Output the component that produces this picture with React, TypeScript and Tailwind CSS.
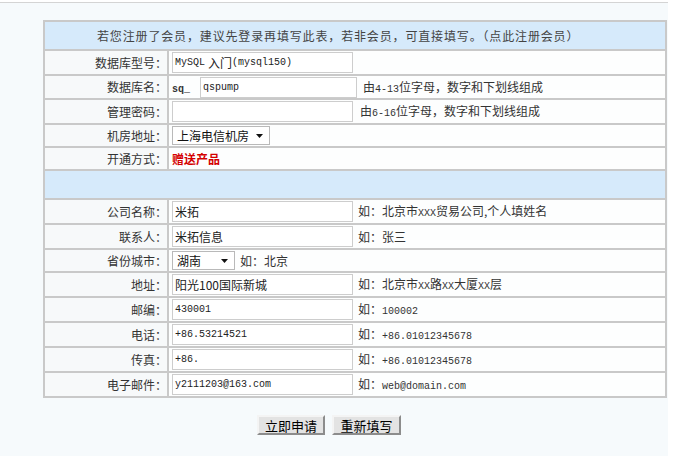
import type { ReactNode } from "react";

// 半角文字（原页面的宋体拉丁字形），用等宽字体替代
function M({ children, bold }: { children: ReactNode; bold?: boolean }) {
  return (
    <span className={`font-['Liberation_Mono',monospace] text-[10px] ${bold ? "font-bold" : ""}`}>
      {children}
    </span>
  );
}

function Label({ children }: { children: ReactNode }) {
  return (
    <div className="flex items-center justify-end bg-[#f7f9fa] text-[12px] text-[#333]">{children}</div>
  );
}

function Field({ value, width = "w-[181px]", mono }: { value: ReactNode; width?: string; mono?: boolean }) {
  return (
    <div
      className={`flex h-[21px] items-center border border-[#cdcdcd] bg-white pl-[2px] text-[12px] text-[#222] ${width}`}
    >
      {mono ? <M>{value}</M> : value}
    </div>
  );
}

function Select({ value, width }: { value: string; width: string }) {
  return (
    <div
      className={`flex h-[19px] items-center justify-between border border-[#b9b9b9] bg-white pl-[4px] pr-[6px] text-[12px] text-[#111] ${width}`}
    >
      <span>{value}</span>
      <svg width="7" height="4" viewBox="0 0 7 4">
        <path d="M0 0h7L3.5 4z" fill="#111" />
      </svg>
    </div>
  );
}

const COMPANY = [
  { label: "公司名称：", value: "米拓", hint: <>如：北京市<M>XXX</M>贸易公司,个人填姓名</> },
  { label: "联系人：", value: "米拓信息", hint: <>如：张三</> },
  { label: "省份城市：", select: "湖南", hint: <>如：北京</> },
  { label: "地址：", value: "阳光100国际新城", hint: <>如：北京市<M>XX</M>路<M>XX</M>大厦<M>XX</M>层</> },
  { label: "邮编：", value: "430001", mono: true, hint: <>如：<M>100002</M></> },
  { label: "电话：", value: "+86.53214521", mono: true, hint: <>如：<M>+86.01012345678</M></> },
  { label: "传真：", value: "+86.", mono: true, hint: <>如：<M>+86.01012345678</M></> },
  { label: "电子邮件：", value: "y2111203@163.com", mono: true, hint: <>如：<M>web@domain.com</M></> },
];

export default function App() {
  return (
    <div className="h-[456px] w-[685px] overflow-hidden bg-white font-['Noto_Sans_CJK_SC',sans-serif] text-[#333]">
      <div className="ml-0 mt-[2px] h-[454px] w-[668px] border-t border-[#d4d4d4] bg-[#f6fafc]">
        <div className="ml-[43px] mt-[17px] grid w-[624px] grid-cols-[122px_1fr] gap-[2px] bg-[#c9c9c9] p-[2px]">
          {/* 提示 */}
          <div className="col-span-2 flex h-[27px] items-center bg-[#d6eafb] pl-[52px] text-[12px] tracking-[0.85px] text-[#444]">
            若您注册了会员，建议先登录再填写此表，若非会员，可直接填写。（点此注册会员）
          </div>

          <Label>数据库型号：</Label>
          <div className="flex h-[23px] items-center bg-[#fdfefe] pl-[3px]">
            <Field
              value={
                <>
                  <M>MySQL </M>
                  <span className="ml-[3px]">入门</span>
                  <M>(mysql150)</M>
                </>
              }
            />
          </div>

          <Label>数据库名：</Label>
          <div className="flex h-[22px] items-center bg-[#fdfefe] pl-[3px] text-[12px]">
            <span className="w-[28px]">
              <M bold>sq_</M>
            </span>
            <Field value="qspump" mono width="w-[157px]" />
            <span className="ml-[6px]">
              由<M>4-13</M>位字母，数字和下划线组成
            </span>
          </div>

          <Label>管理密码：</Label>
          <div className="flex h-[23px] items-center bg-[#fdfefe] pl-[3px] text-[12px]">
            <Field value="" />
            <span className="ml-[7px]">
              由<M>6-16</M>位字母，数字和下划线组成
            </span>
          </div>

          <Label>机房地址：</Label>
          <div className="flex h-[21px] items-center bg-[#fdfefe] pl-[3px]">
            <Select value="上海电信机房" width="w-[98px]" />
          </div>

          <Label>开通方式：</Label>
          <div className="flex h-[21px] items-center bg-[#fdfefe] pl-[3px] text-[12px] font-bold text-[#d40000]">
            赠送产品
          </div>

          <div className="col-span-2 h-[27px] bg-[#d6eafb]" />

          {COMPANY.map((r) => (
            <div key={r.label} className="col-span-2 grid grid-cols-[122px_1fr] gap-[2px]">
              <Label>{r.label}</Label>
              <div
                className={`flex items-center bg-[#fdfefe] pl-[3px] text-[12px] text-[#333] ${r.select ? "h-[21px]" : "h-[23px]"}`}
              >
                {r.select ? (
                  <>
                    <Select value={r.select} width="w-[63px]" />
                    <span className="ml-[5px]">{r.hint}</span>
                  </>
                ) : (
                  <>
                    <Field value={r.value} mono={r.mono} />
                    <span className="ml-[5px]">{r.hint}</span>
                  </>
                )}
              </div>
            </div>
          ))}
        </div>

        <div className="mt-[17px] flex gap-[7px] pl-[257px]">
          <button className="h-[20px] w-[68px] border-2 border-b-[#8c8c8c] border-l-[#f4f4f4] border-r-[#8c8c8c] border-t-[#f4f4f4] bg-[#e3e3e3] text-[13px] leading-none text-black">
            立即申请
          </button>
          <button className="h-[20px] w-[69px] border-2 border-b-[#8c8c8c] border-l-[#f4f4f4] border-r-[#8c8c8c] border-t-[#f4f4f4] bg-[#e3e3e3] text-[13px] leading-none text-black">
            重新填写
          </button>
        </div>
      </div>
    </div>
  );
}
